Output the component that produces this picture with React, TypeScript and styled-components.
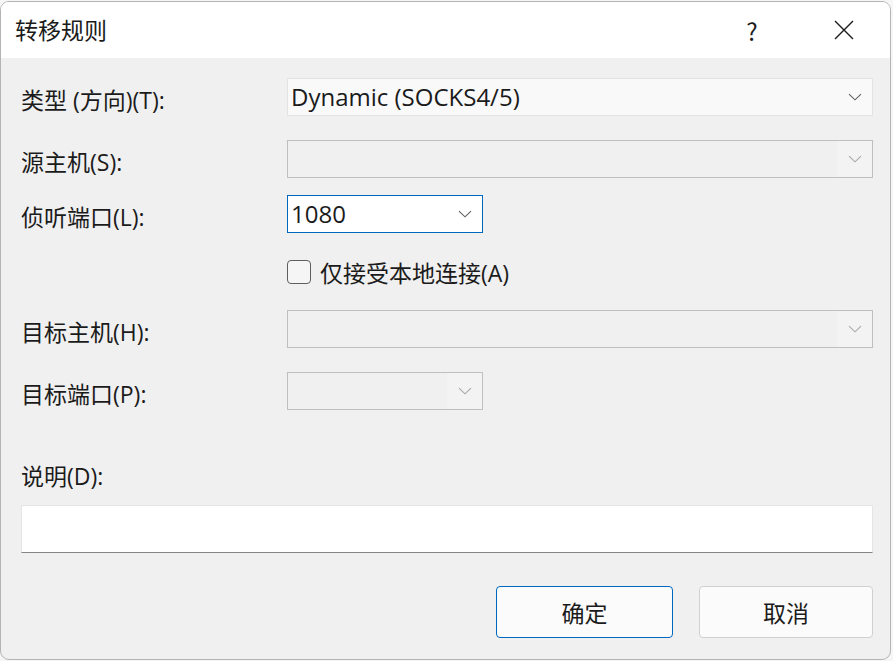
import styled, { createGlobalStyle } from "styled-components";

const GlobalStyle = createGlobalStyle`
  html, body {
    margin: 0;
    padding: 0;
    background: #f6f6f6;
  }
  body {
    font-family: "Open Sans", "Noto Sans CJK SC", sans-serif;
    color: #1b1b1b;
  }
`;

const Dialog = styled.div`
  box-sizing: border-box;
  width: 891px;
  height: 659px;
  margin-top: 1px;
  border: 1px solid #b4b4b4;
  border-radius: 9px;
  background: #f0f0f0;
  overflow: hidden;
  display: flex;
  flex-direction: column;
`;

const TitleBar = styled.div`
  height: 56px;
  background: #ffffff;
  display: flex;
  align-items: center;
  padding-left: 14px;
`;

const Title = styled.div`
  flex: 1;
  font-size: 23px;
  font-family: "Noto Sans CJK SC", sans-serif;
  margin-top: -2px;
`;

const TitleButton = styled.div`
  width: 92px;
  height: 56px;
  display: flex;
  align-items: center;
  justify-content: center;
  font-size: 24px;
  font-family: "Noto Sans CJK SC", sans-serif;
`;

const Body = styled.div`
  flex: 1;
  padding: 20px 17px 0 20px;
  display: flex;
  flex-direction: column;
`;

const Row = styled.div<{ $top?: number; $height?: number }>`
  display: flex;
  align-items: center;
  margin-top: ${(p) => p.$top ?? 0}px;
  height: ${(p) => p.$height ?? 38}px;
`;

const Label = styled.div`
  width: 266px;
  font-size: 23px;
  padding-top: 3px;
`;

const Combo = styled.div<{ $width?: number; $disabled?: boolean; $focused?: boolean }>`
  box-sizing: border-box;
  height: 38px;
  width: ${(p) => (p.$width ? `${p.$width}px` : "auto")};
  flex: ${(p) => (p.$width ? "none" : "1")};
  display: flex;
  align-items: center;
  border: 1px solid
    ${(p) => (p.$focused ? "#0067c0" : p.$disabled ? "#bfbfbf" : "#e3e3e3")};
  background: ${(p) => (p.$focused ? "#ffffff" : p.$disabled ? "#f0f0f0" : "#f9f9f9")};
  font-size: 24px;
  padding-left: 3px;
`;

const ComboText = styled.div`
  flex: 1;
  padding-bottom: 1px;
`;

const ComboButton = styled.div<{ $disabled?: boolean }>`
  width: 35px;
  align-self: stretch;
  display: flex;
  align-items: center;
  justify-content: center;
  background: ${(p) => (p.$disabled ? "#f3f3f3" : "transparent")};
  color: ${(p) => (p.$disabled ? "#a8a8a8" : "#606060")};
`;

const CheckRow = styled.label`
  display: flex;
  align-items: center;
  gap: 9px;
  margin-left: 266px;
  font-size: 23px;
`;

const CheckBox = styled.span`
  box-sizing: border-box;
  width: 24px;
  height: 24px;
  border: 1px solid #5e5e5e;
  border-radius: 4px;
  background: #f5f5f5;
`;

const TextBox = styled.div`
  box-sizing: border-box;
  height: 48px;
  margin-top: 12px;
  background: #ffffff;
  border: 1px solid #e5e5e5;
  border-bottom: 1px solid #868686;
`;

const Footer = styled.div`
  display: flex;
  justify-content: flex-end;
  gap: 26px;
  margin-top: 33px;
`;

const Button = styled.div<{ $primary?: boolean }>`
  box-sizing: border-box;
  width: ${(p) => (p.$primary ? 177 : 174)}px;
  height: 52px;
  border-radius: 4px;
  border: 1px solid ${(p) => (p.$primary ? "#0067c0" : "#d0d0d0")};
  background: #fbfbfb;
  display: flex;
  align-items: center;
  justify-content: center;
  font-size: 23px;
  font-family: "Noto Sans CJK SC", sans-serif;
`;

function Chevron() {
  return (
    <svg width="14" height="8" viewBox="0 0 14 8" fill="none">
      <path d="M1 1.2 L7 6.8 L13 1.2" stroke="currentColor" strokeWidth="1.1" />
    </svg>
  );
}

function CloseIcon() {
  return (
    <svg width="20" height="20" viewBox="0 0 20 20" fill="none">
      <path d="M1 1 L19 19 M19 1 L1 19" stroke="#1b1b1b" strokeWidth="1.4" />
    </svg>
  );
}

export default function App() {
  return (
    <>
      <GlobalStyle />
      <Dialog>
        <TitleBar>
          <Title>转移规则</Title>
          <TitleButton>?</TitleButton>
          <TitleButton>
            <CloseIcon />
          </TitleButton>
        </TitleBar>
        <Body>
          <Row>
            <Label>类型 (方向)(T):</Label>
            <Combo>
              <ComboText>Dynamic (SOCKS4/5)</ComboText>
              <ComboButton>
                <Chevron />
              </ComboButton>
            </Combo>
          </Row>
          <Row $top={24}>
            <Label>源主机(S):</Label>
            <Combo $disabled>
              <ComboText />
              <ComboButton $disabled>
                <Chevron />
              </ComboButton>
            </Combo>
          </Row>
          <Row $top={17}>
            <Label>侦听端口(L):</Label>
            <Combo $width={196} $focused>
              <ComboText>1080</ComboText>
              <ComboButton>
                <Chevron />
              </ComboButton>
            </Combo>
          </Row>
          <Row $height={77}>
            <CheckRow>
              <CheckBox />
              仅接受本地连接(A)
            </CheckRow>
          </Row>
          <Row>
            <Label>目标主机(H):</Label>
            <Combo $disabled>
              <ComboText />
              <ComboButton $disabled>
                <Chevron />
              </ComboButton>
            </Combo>
          </Row>
          <Row $top={24}>
            <Label>目标端口(P):</Label>
            <Combo $width={196} $disabled>
              <ComboText />
              <ComboButton $disabled>
                <Chevron />
              </ComboButton>
            </Combo>
          </Row>
          <Row $top={43} $height={40}>
            <Label>说明(D):</Label>
          </Row>
          <TextBox />
          <Footer>
            <Button $primary>确定</Button>
            <Button>取消</Button>
          </Footer>
        </Body>
      </Dialog>
    </>
  );
}
